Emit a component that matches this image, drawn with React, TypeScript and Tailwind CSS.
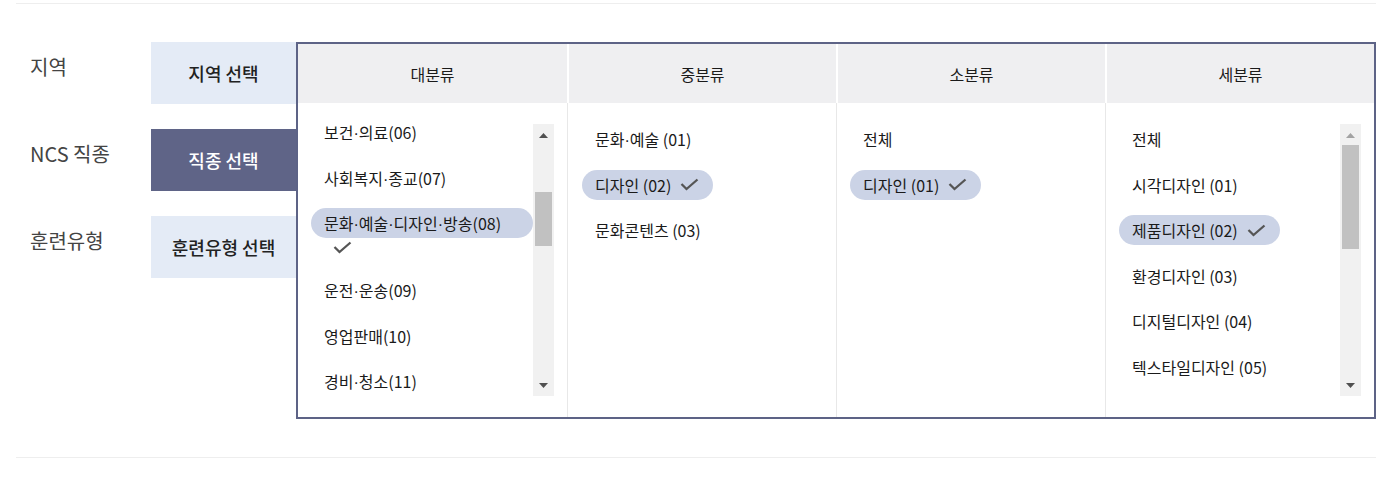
import React from 'react';

const FONT = { fontFamily: '"Noto Sans CJK KR", "Noto Sans", sans-serif' };

// the middle dot in the CJK font is full width; the page uses a narrow one
const Txt = ({ text }: { text: string }) => {
  const parts = text.split('·');
  return (
    <>
      {parts.map((p, i) => (
        <React.Fragment key={i}>
          {i > 0 && <span style={{ fontFamily: '"Liberation Sans", sans-serif' }}>·</span>}
          {p}
        </React.Fragment>
      ))}
    </>
  );
};

const Check = ({ className = '' }: { className?: string }) => (
  <svg width="19" height="13" viewBox="0 0 19 13" className={className}>
    <polyline points="1.5,6 6.5,11 17.5,1.5" fill="none" stroke="#555" strokeWidth="2.3" />
  </svg>
);

const Arrow = ({ up, light = false }: { up?: boolean; light?: boolean }) => (
  <svg width="9" height="5" viewBox="0 0 9 5">
    <polygon points={up ? '4.5,0 9,5 0,5' : '0,0 9,0 4.5,5'} fill={light ? '#a3a3a3' : '#505050'} />
  </svg>
);

interface ScrollbarProps {
  thumbTop: number;
  thumbHeight: number;
  upLight?: boolean;
}

const Scrollbar: React.FC<ScrollbarProps> = ({ thumbTop, thumbHeight, upLight }) => (
  <div className="relative w-[21px] h-full bg-[#f1f1f1] shrink-0">
    <div className="absolute left-0 right-0 top-[9px] flex justify-center">
      <Arrow up light={upLight} />
    </div>
    <div
      className="absolute left-[2px] right-[2px] bg-[#c1c1c1]"
      style={{ top: thumbTop, height: thumbHeight }}
    />
    <div className="absolute left-0 right-0 bottom-[8px] flex justify-center">
      <Arrow />
    </div>
  </div>
);

const Item = ({ label }: { label: string }) => (
  <div className="h-[30px] leading-[30px] px-[13px] whitespace-nowrap">
    <Txt text={label} />
  </div>
);

const Picked = ({ label }: { label: string }) => (
  <div className="h-[30px] self-start flex items-center gap-[9px] pl-[13px] pr-[14px] rounded-full bg-[#cbd3e6] whitespace-nowrap">
    <span>
      <Txt text={label} />
    </span>
    <Check />
  </div>
);

const rows = [
  { label: '지역', button: '지역 선택', active: false },
  { label: 'NCS 직종', button: '직종 선택', active: true },
  { label: '훈련유형', button: '훈련유형 선택', active: false },
];

const headers = ['대분류', '중분류', '소분류', '세분류'];

export default function App() {
  return (
    <div className="bg-white w-[1400px] h-[477px] pt-[3px]" style={FONT}>
      <div className="ml-[16px] w-[1360px] border-t border-b border-[#eeeeee] pt-[38px] pb-[38px]">
        <div className="flex">
          <div className="flex flex-col gap-[25px]">
            {rows.map(r => (
              <div key={r.label} className="flex">
                <div className="w-[135px] pl-[14px] pt-[11px] text-[20px] leading-[28px] text-[#444]">
                  {r.label}
                </div>
                <div
                  className={`w-[145px] h-[62px] flex items-center justify-center text-[18px] font-medium ${
                    r.active ? 'bg-[#5f6487] text-white' : 'bg-[#e4ebf6] text-[#222]'
                  }`}
                >
                  {r.button}
                </div>
              </div>
            ))}
          </div>

          <div className="flex-1 h-[377px] border-2 border-[#5d6386] flex flex-col text-[16px] text-[#1a1a1a]">
            <div className="h-[59px] bg-[#efeff1] grid grid-cols-4">
              {headers.map((h, i) => (
                <div
                  key={h}
                  className={`flex items-center justify-center ${i > 0 ? 'border-l-2 border-white' : ''}`}
                >
                  {h}
                </div>
              ))}
            </div>

            <div className="flex-1 grid grid-cols-4">
              {/* 대분류 - list scrolled a little */}
              <div className="flex pl-[13px] pr-[13px] py-[21px]">
                <div className="flex-1">
                  <div className="-mt-[7px] flex flex-col gap-[15.5px]">
                    <Item label="보건·의료(06)" />
                    <Item label="사회복지·종교(07)" />
                    <div className="flex flex-col">
                      <div className="h-[30px] leading-[30px] pl-[13px] rounded-full bg-[#cbd3e6] whitespace-nowrap">
                        <Txt text="문화·예술·디자인·방송(08)" />
                      </div>
                      <div className="h-[21.5px] pl-[22px] pt-[3px]">
                        <Check />
                      </div>
                    </div>
                    <Item label="운전·운송(09)" />
                    <Item label="영업판매(10)" />
                    <Item label="경비·청소(11)" />
                  </div>
                </div>
                <Scrollbar thumbTop={68} thumbHeight={54} />
              </div>

              {/* 중분류 */}
              <div className="border-l border-[#e8e8e8] pl-[14px] pr-[13px] py-[21px] flex flex-col gap-[15.5px]">
                <Item label="문화·예술 (01)" />
                <Picked label="디자인 (02)" />
                <Item label="문화콘텐츠 (03)" />
              </div>

              {/* 소분류 */}
              <div className="border-l border-[#e8e8e8] pl-[13px] pr-[13px] py-[21px] flex flex-col gap-[15.5px]">
                <Item label="전체" />
                <Picked label="디자인 (01)" />
              </div>

              {/* 세분류 */}
              <div className="border-l border-[#e8e8e8] flex pl-[13px] pr-[13px] py-[21px]">
                <div className="flex-1 flex flex-col gap-[15.5px]">
                  <Item label="전체" />
                  <Item label="시각디자인 (01)" />
                  <Picked label="제품디자인 (02)" />
                  <Item label="환경디자인 (03)" />
                  <Item label="디지털디자인 (04)" />
                  <Item label="텍스타일디자인 (05)" />
                </div>
                <Scrollbar thumbTop={21} thumbHeight={104} upLight />
              </div>
            </div>
          </div>
        </div>
      </div>
    </div>
  );
}
